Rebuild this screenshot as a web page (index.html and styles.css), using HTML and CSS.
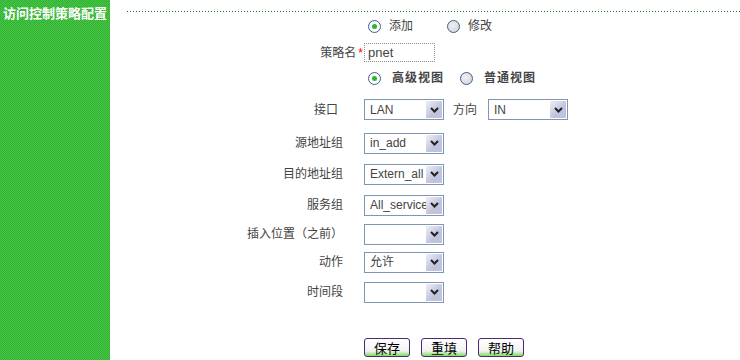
FILE: index.html
```html
<!DOCTYPE html>
<html lang="zh-CN">
<head>
  <meta charset="UTF-8" />
  <title>访问控制策略配置</title>
  <link rel="stylesheet" href="styles.css">
</head>
<body>
  <div class="page">
    <aside class="side">
      <div class="side-title">访问控制策略配置</div>
    </aside>

    <main class="main">
      <div class="rule"></div>

      <div class="form">
        <div class="lbl"></div>
        <div class="fld">
          <span class="radio"><span class="dot on"></span>添加</span>
          <span class="radio gap-lg"><span class="dot"></span>修改</span>
        </div>

        <div class="lbl tight">策略名<span class="req">*</span></div>
        <div class="fld"><span class="txt">pnet</span></div>

        <div class="lbl"></div>
        <div class="fld bold">
          <span class="radio wide"><span class="dot on"></span>高级视图</span>
          <span class="radio wide gap-md"><span class="dot"></span>普通视图</span>
        </div>

        <div class="lbl pad-lg">接口</div>
        <div class="fld">
          <span class="sel"><span class="sel-txt">LAN</span><span class="sel-btn"><svg width="9" height="6" viewBox="0 0 9 6"><path d="M1 1L4.5 4.5L8 1" /></svg></span></span>
          <span class="inline-lbl">方向</span>
          <span class="sel"><span class="sel-txt">IN</span><span class="sel-btn"><svg width="9" height="6" viewBox="0 0 9 6"><path d="M1 1L4.5 4.5L8 1" /></svg></span></span>
        </div>

        <div class="lbl">源地址组</div>
        <div class="fld"><span class="sel"><span class="sel-txt">in_add</span><span class="sel-btn"><svg width="9" height="6" viewBox="0 0 9 6"><path d="M1 1L4.5 4.5L8 1" /></svg></span></span></div>

        <div class="lbl">目的地址组</div>
        <div class="fld"><span class="sel"><span class="sel-txt">Extern_all</span><span class="sel-btn"><svg width="9" height="6" viewBox="0 0 9 6"><path d="M1 1L4.5 4.5L8 1" /></svg></span></span></div>

        <div class="lbl">服务组</div>
        <div class="fld"><span class="sel"><span class="sel-txt">All_service</span><span class="sel-btn"><svg width="9" height="6" viewBox="0 0 9 6"><path d="M1 1L4.5 4.5L8 1" /></svg></span></span></div>

        <div class="lbl">插入位置（之前）</div>
        <div class="fld"><span class="sel"><span class="sel-txt"></span><span class="sel-btn"><svg width="9" height="6" viewBox="0 0 9 6"><path d="M1 1L4.5 4.5L8 1" /></svg></span></span></div>

        <div class="lbl">动作</div>
        <div class="fld"><span class="sel"><span class="sel-txt">允许</span><span class="sel-btn"><svg width="9" height="6" viewBox="0 0 9 6"><path d="M1 1L4.5 4.5L8 1" /></svg></span></span></div>

        <div class="lbl">时间段</div>
        <div class="fld"><span class="sel"><span class="sel-txt"></span><span class="sel-btn"><svg width="9" height="6" viewBox="0 0 9 6"><path d="M1 1L4.5 4.5L8 1" /></svg></span></span></div>

        <div class="lbl"></div>
        <div class="fld buttons">
          <button class="btn">保存</button>
          <button class="btn">重填</button>
          <button class="btn">帮助</button>
        </div>
      </div>
    </main>
  </div>
</body>
</html>
```

FILE: styles.css
```css
* { box-sizing: border-box; }
html, body {
  margin: 0; padding: 0;
  width: 740px; height: 360px;
  overflow: hidden;
  background: #fff;
  color: #444;
  font-family: "Liberation Sans", "Noto Sans CJK SC", sans-serif;
  font-size: 12px;
}
.page {
  display: flex;
  height: 360px;
}
.side {
  width: 110px;
  flex-shrink: 0;
  background: repeating-conic-gradient(#4ac84a 0 25%, #2fae30 0 50%) 0 0 / 2px 2px;
}
.side-title {
  color: #fff;
  font-weight: bold;
  font-size: 13px;
  line-height: 14px;
  padding: 7px 0 0 3px;
  white-space: nowrap;
}
.main {
  flex: 1;
  display: flex;
  flex-direction: column;
}
.rule {
  flex-shrink: 0;
  height: 1px;
  margin: 11px 0 0 17px;
  background: linear-gradient(90deg, #137a13 1px, transparent 1px) 0 0 / 3px 1px repeat-x;
}
.form {
  flex-shrink: 0;
  margin-top: 4px;
  display: grid;
  grid-template-columns: 254px auto;
  grid-template-rows: 20px 33px 18px 45px 22px 40px 22px 36px 20px 40px 40px;
  align-items: center;
}
.lbl {
  text-align: right;
  padding-right: 21px;
  line-height: 16px;
  white-space: nowrap;
}
.lbl.tight { padding-right: 1px; }
.lbl.pad-lg { padding-right: 26px; }
.req {
  color: #f00;
  margin-left: 2px;
}
.fld {
  display: flex;
  align-items: center;
  line-height: 16px;
}
.radio {
  display: flex;
  align-items: center;
  gap: 8px;
  margin-left: 4px;
}
.radio.wide { gap: 11px; }
.radio.gap-lg { margin-left: 34px; }
.radio.gap-md { margin-left: 16px; }
.bold {
  font-weight: bold;
  letter-spacing: 1px;
}
.dot {
  width: 13px;
  height: 13px;
  border-radius: 50%;
  border: 1px solid #3b5f8c;
  background: radial-gradient(circle at 40% 40%, #f2f2f2, #cfcfd6);
  display: flex;
  align-items: center;
  justify-content: center;
}
.dot.on { background: #fff; }
.dot.on::after {
  content: "";
  width: 5px;
  height: 5px;
  border-radius: 50%;
  background: #2eb52e;
}
.txt {
  width: 71px;
  height: 19px;
  border: 1px dotted #8a8a8a;
  padding: 1px 3px;
  font-size: 13px;
  color: #444;
  line-height: 16px;
}
.sel {
  display: inline-flex;
  align-items: center;
  width: 80px;
  height: 21px;
  border: 1px solid #7f97b4;
  background: #fff;
}
.sel-txt {
  flex: 1;
  padding-left: 5px;
  overflow: hidden;
  white-space: nowrap;
  color: #444;
  font-size: 12px;
}
.sel-btn {
  flex-shrink: 0;
  width: 16px;
  height: 17px;
  margin-right: 1px;
  background: linear-gradient(135deg, #eef0f8, #bfc3dc 60%);
  display: flex;
  align-items: center;
  justify-content: center;
}
.sel-btn path {
  fill: none;
  stroke: #222;
  stroke-width: 2;
}
.inline-lbl {
  margin: 0 11px 0 9px;
}
.buttons {
  gap: 11px;
  align-self: start;
  padding-top: 26px;
}
.btn {
  width: 46px;
  height: 19px;
  padding: 0;
  border: 1px solid #4a2a7e;
  border-radius: 3px;
  background: linear-gradient(#fff 0, #f3f3f3 70%, #7edc5a 100%);
  color: #000;
  font-family: "Noto Sans CJK SC", sans-serif;
  font-size: 13px;
  line-height: 16px;
}
```
